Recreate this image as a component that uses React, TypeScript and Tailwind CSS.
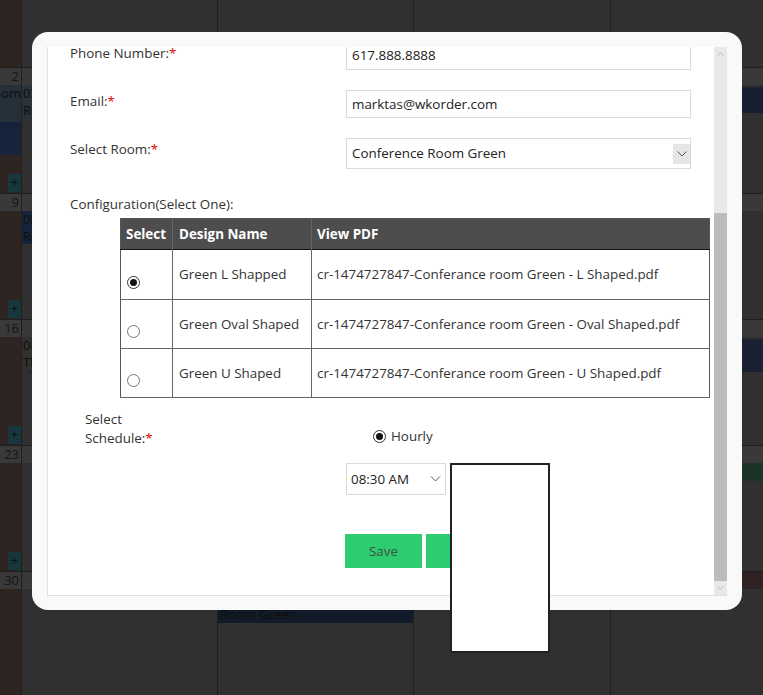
import type { ReactNode } from 'react'

const cols = 'grid grid-cols-[22px_196px_196px_197px_1fr]'

function Chevron({ className = '', color = '#555' }: { className?: string; color?: string }) {
  return (
    <svg viewBox="0 0 10 6" className={className} fill="none">
      <path d="M0.5 0.5 L5 5 L9.5 0.5" stroke={color} strokeWidth="1" />
    </svg>
  )
}

function Strip({ n, redLast = false }: { n: string; redLast?: boolean }) {
  return (
    <div className={`${cols} h-[18px]`}>
      <div className="border-r border-t border-[#1f1f1f] bg-[#393939] pr-[2px] text-right text-[13px] leading-[17px] text-[#151515]">
        {n}
      </div>
      <div className="border-r border-t border-[#1f1f1f] bg-[#393939]" />
      <div className="border-r border-t border-[#1f1f1f] bg-[#393939]" />
      <div className="border-r border-t border-[#1f1f1f] bg-[#393939]" />
      <div className={`border-t border-[#1f1f1f] ${redLast ? 'bg-[#2f2222]' : 'bg-[#393939]'}`} />
    </div>
  )
}

function Body({ h = 'h-[108px]', plus = true, c0, c1, c2, c4 }: { h?: string; plus?: boolean; c0?: ReactNode; c1?: ReactNode; c2?: ReactNode; c4?: ReactNode }) {
  return (
    <div className={`${cols} ${h}`}>
      <div className="flex flex-col overflow-hidden border-r border-[#1f1f1f] bg-[#2e2523]">
        <div className="flex-1">{c0}</div>
        {plus && (
          <div className="mb-px ml-[8px] flex h-[18px] w-[13px] items-center justify-center bg-[#17363d] text-[12px] leading-none text-[#0d0d0d]">
            +
          </div>
        )}
      </div>
      <div className="overflow-hidden border-r border-[#1f1f1f] bg-[#303030]">{c1}</div>
      <div className="overflow-hidden border-r border-[#1f1f1f] bg-[#303030]">{c2}</div>
      <div className="border-r border-[#1f1f1f] bg-[#303030]" />
      <div className="overflow-hidden bg-[#303030]">{c4}</div>
    </div>
  )
}

function Backdrop() {
  const ev = 'whitespace-nowrap text-[13px] leading-[17px] text-[#0e0e0e]'
  return (
    <div className="flex flex-col">
      <Body h="h-[67px]" plus={false} />
      <Strip n="2" />
      <Body
        c0={
          <>
            <div className={`flex h-[37px] justify-end overflow-hidden bg-[#25303a] ${ev}`}>Room</div>
            <div className="h-[33px] bg-[#16233a]" />
          </>
        }
        c1={<div className={`h-[35px] bg-[#29343a] pl-[1px] ${ev}`}>03<br />Re</div>}
        c4={<div className={`mt-[2px] h-[26px] bg-[#172030] ${ev}`}>Conference</div>}
      />
      <Strip n="9" />
      <Body c1={<div className={`h-[33px] bg-[#17233a] pl-[1px] ${ev}`}>08<br />Ro</div>} />
      <Strip n="16" />
      <Body
        c1={
          <>
            <div className={`pl-[1px] ${ev}`}>08<br />Th</div>
            <div className="ml-[6px] h-[3px] w-[30px] bg-[#262626]" />
          </>
        }
        c4={<div className={`mt-[2px] h-[33px] bg-[#1b2133] ${ev}`}>Desk Eng</div>}
      />
      <Strip n="23" />
      <Body c4={<div className={`h-[18px] bg-[#1d3328] ${ev}`}>Double Ro</div>} />
      <Strip n="30" redLast />
      <Body
        plus={false}
        c2={
          <div className={`h-[34px] bg-[#121b29] pl-[2px] ${ev}`}>
            08:30 AM Conference
            <br />
            Room Green
          </div>
        }
      />
    </div>
  )
}

function Radio({ checked = false }: { checked?: boolean }) {
  return (
    <span
      className={`inline-flex h-[13px] w-[13px] items-center justify-center rounded-full border bg-white ${
        checked ? 'border-[#333]' : 'border-[#777]'
      }`}
    >
      {checked && <span className="h-[7px] w-[7px] rounded-full bg-[#111]" />}
    </span>
  )
}

function Req() {
  return <span className="text-[#e60000]">*</span>
}

const designs = [
  { name: 'Green L Shapped', pdf: 'cr-1474727847-Conferance room Green - L Shaped.pdf', h: 'h-[50px]', checked: true },
  { name: 'Green Oval Shaped', pdf: 'cr-1474727847-Conferance room Green - Oval Shaped.pdf', h: 'h-[49px]' },
  { name: 'Green U Shaped', pdf: 'cr-1474727847-Conferance room Green - U Shaped.pdf', h: 'h-[49px]' },
]

function Scrollbar() {
  return (
    <div className="flex w-[13px] flex-col bg-[#e8e8e8]">
      <div className="flex h-[14px] items-center justify-center">
        <Chevron className="h-[4px] w-[7px] rotate-180" color="#a3a3a3" />
      </div>
      <div className="h-[152px]" />
      <div className="flex-1 bg-[#bcbcbc]" />
      <div className="flex h-[14px] items-center justify-center">
        <Chevron className="h-[4px] w-[7px]" color="#a3a3a3" />
      </div>
    </div>
  )
}

export default function App() {
  const label = 'w-[276px] shrink-0 text-[13.4px] leading-[20px] text-[#333]'
  const input = 'w-[345px] border border-[#dadada] bg-white pl-[5px] text-[13.4px] text-[#222]'
  return (
    <div className="relative h-[695px] w-[763px] overflow-hidden bg-[#303030] font-['Open_Sans',sans-serif]">
      <Backdrop />

      <div className="absolute left-[32px] top-[32px] h-[578px] w-[710px] rounded-[16px] bg-[#f9f9f9] pb-[14px] pl-[15px] pr-[15px] pt-[15px]">
        <div className="flex h-full border-b border-l border-[#e0e0e0] bg-white">
          <div className="flex-1 overflow-hidden pl-[22px]">
            <div className="-mt-[7px]">
              <div className="flex items-start">
                <div className={`${label} pt-[3px]`}>
                  Phone Number:<Req />
                </div>
                <div className={`${input} flex h-[30px] items-center`}>617.888.8888</div>
              </div>

              <div className="mt-[20px] flex items-start">
                <div className={`${label} pt-[1px]`}>
                  Email:<Req />
                </div>
                <div className={`${input} flex h-[28px] items-center`}>marktas@wkorder.com</div>
              </div>

              <div className="mt-[20px] flex items-start">
                <div className={`${label} pt-[1px]`}>
                  Select Room:<Req />
                </div>
                <div className={`${input} flex h-[31px] items-center justify-between pl-[4px]`}>
                  <span>Conference Room Green</span>
                  <span className="flex h-[20px] w-[17px] items-center justify-center bg-[#e6e6e6]">
                    <Chevron className="h-[6px] w-[10px]" color="#555" />
                  </span>
                </div>
              </div>

              <div className="mt-[25px] text-[13.4px] leading-[20px] text-[#333]">Configuration(Select One):</div>

              <table className="ml-[50px] mt-[4px] w-[590px] border-collapse border border-[#555] text-[13.4px] text-[#333]">
                <thead>
                  <tr className="h-[31px] border-b border-[#111] bg-[#4d4d4d] text-left text-white">
                    <th className="w-[52px] border-r border-[#666] pl-[5px] font-bold">Select</th>
                    <th className="w-[139px] border-r border-[#666] pl-[6px] font-bold">Design Name</th>
                    <th className="pl-[5px] font-bold">View PDF</th>
                  </tr>
                </thead>
                <tbody>
                  {designs.map((d) => (
                    <tr key={d.name} className={`${d.h} border-b border-[#666]`}>
                      <td className="border-r border-[#666] pl-[6px] pt-[25px] align-top leading-none">
                        <Radio checked={d.checked} />
                      </td>
                      <td className="border-r border-[#666] pl-[6px] align-middle">{d.name}</td>
                      <td className="pl-[5px] align-middle">{d.pdf}</td>
                    </tr>
                  ))}
                </tbody>
              </table>

              <div className="mt-[12px] flex items-start pl-[15px]">
                <div className="w-[261px] shrink-0">
                  <div className="w-[80px] text-[13.4px] leading-[19px] text-[#333]">
                    Select Schedule:<Req />
                  </div>
                </div>
                <div className="flex flex-col">
                  <div className="ml-[27px] mt-[16px] flex h-[20px] items-center gap-[5px] text-[13.4px] text-[#333]">
                    <Radio checked />
                    <span>Hourly</span>
                  </div>
                  <div className="mt-[17px] flex h-[32px] w-[100px] items-center justify-between border border-[#dadada] pl-[4px] pr-[4px] text-[13.4px] text-[#222]">
                    <span>08:30 AM</span>
                    <Chevron className="h-[6px] w-[11px]" color="#555" />
                  </div>
                  <div className="-ml-px mt-[39px] flex gap-[4px]">
                    <button type="button" className="h-[34px] w-[77px] bg-[#2ecc71] text-[13.4px] text-[#3d5045]">
                      Save
                    </button>
                    <button type="button" className="h-[34px] w-[100px] bg-[#2ecc71] text-[13.4px] text-[#3d5045]">
                      Cancel
                    </button>
                  </div>
                </div>
              </div>
            </div>
          </div>
          <Scrollbar />
        </div>
      </div>

      <div className="absolute left-[450px] top-[463px] h-[190px] w-[100px] border-2 border-[#222] bg-white" />
    </div>
  )
}
